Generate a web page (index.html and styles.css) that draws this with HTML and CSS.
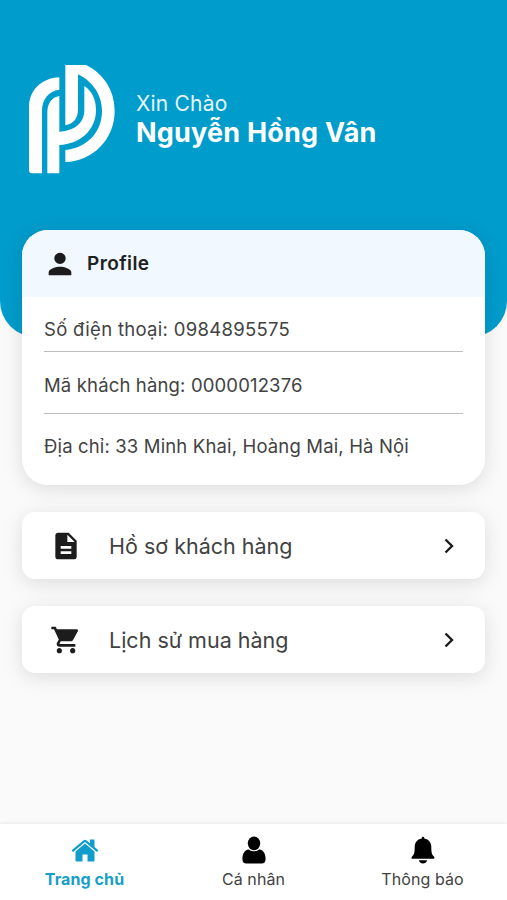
FILE: index.html
```html
<!DOCTYPE html>
<html lang="vi">
<head>
<title>Trang chủ</title>
<meta charset="utf-8">
<meta name="viewport" content="width=device-width, initial-scale=1">
<link rel="stylesheet" href="styles.css">
</head>

<body>
  <div id="main">
    <div id="top">
      <svg class="logo" viewBox="41 45 258 327">
        <path d="M41 370V172C41 122 78 84 132 82V119C100 123 80 148 80 182V370H50Q41 370 41 361Z"/>
        <path d="M96 370V188C96 160 109 142 132 138V245C176 243 207 220 207 180V108C230 124 242 148 242 180C242 240 195 282 132 285V370Z"/>
        <path d="M150 45H212C264 70 298 120 298 183C298 268 232 334 150 336V300C215 294 260 246 260 183C260 135 232 94 188 73V178C188 206 174 222 150 226Z"/>
      </svg>
      <div class="hello">
        <span class="hi">Xin Chào</span>
        <span class="name">Nguyễn Hồng Vân</span>
      </div>
    </div>

    <div id="profile">
      <div class="profileHead">
        <svg width="34" height="34" viewBox="0 0 24 24"><path d="M12 12c2.21 0 4-1.79 4-4s-1.79-4-4-4-4 1.79-4 4 1.79 4 4 4zm0 2c-2.67 0-8 1.34-8 4v2h16v-2c0-2.66-5.330-4-8-4z"/></svg>
        <span>Profile</span>
      </div>
      <div class="profileBody">
        <div class="row phone">Số điện thoại: 0984895575</div>
        <div class="row code">Mã khách hàng: 0000012376</div>
        <div class="row address">Địa chỉ: 33 Minh Khai, Hoàng Mai, Hà Nội</div>
      </div>
    </div>

    <a class="item">
      <svg class="icon" viewBox="0 0 24 24"><path d="M14 2H6c-1.100 0-1.990.9-1.990 2L4 20c0 1.100.89 2 1.990 2H18c1.100 0 2-.9 2-2V8l-6-6zm2 16H8v-2h8v2zm0-4H8v-2h8v2zm-3-5V3.500L18.500 9H13z"/></svg>
      <span class="label">Hồ sơ khách hàng</span>
      <svg class="arrow" viewBox="0 0 10 16"><path d="M1.500 1.500L8 8l-6.500 6.500"/></svg>
    </a>
    <a class="item">
      <svg class="icon" viewBox="0 0 24 24"><path d="M7 18c-1.100 0-1.990.9-1.990 2S5.900 22 7 22s2-.9 2-2-.9-2-2-2zM1 2v2h2l3.600 7.590-1.350 2.450c-.16.28-.25.61-.25.96 0 1.100.9 2 2 2h12v-2H7.420c-.14 0-.25-.11-.25-.25l.03-.12.9-1.630h7.450c.75 0 1.410-.41 1.750-1.030l3.580-6.490c.08-.14.12-.31.12-.48 0-.55-.45-1-1-1H5.210l-.94-2H1zm16 16c-1.100 0-1.990.9-1.990 2s.89 2 1.990 2 2-.9 2-2-.9-2-2-2z"/></svg>
      <span class="label">Lịch sử mua hàng</span>
      <svg class="arrow" viewBox="0 0 10 16"><path d="M1.500 1.500L8 8l-6.500 6.500"/></svg>
    </a>
  </div>

  <div id="nav">
    <a class="tab active">
      <svg width="28" height="28" viewBox="0 0 28 28">
        <path d="M14 7.500L4.500 15.500V24.500Q4.500 25.500 5.500 25.500H11.500V18.500H16.500V25.500H22.500Q23.500 25.500 23.500 24.500V15.500Z"/>
        <path d="M.6 14.200L12.700 4.200Q14 3.200 15.300 4.200L19 7.200V3.500H23.500V11L27.400 14.200L26 15.900L14 6L2 15.900Z"/>
      </svg>
      <span>Trang chủ</span>
    </a>
    <a class="tab">
      <svg width="28" height="28" viewBox="0 0 28 28">
        <ellipse cx="14" cy="7.300" rx="6.200" ry="6.900"/>
        <path d="M8.700 13.500Q14 17.200 19.300 13.500C23.800 14 25.600 18.300 25.600 23Q25.600 27.600 21.500 27.600H6.500Q2.400 27.600 2.400 23C2.400 18.300 4.200 14 8.700 13.500Z"/>
      </svg>
      <span>Cá nhân</span>
    </a>
    <a class="tab">
      <svg width="28" height="28" viewBox="0 0 28 28">
        <path d="M12.700 1.900Q12.700.7 14 .7T15.300 1.900V2.500C20 3.300 22.300 7 22.300 11C22.300 17 23 18.800 24.800 20.300Q26 21.400 25.200 22.800H2.800Q2 21.400 3.200 20.300C5 18.800 5.700 17 5.700 11C5.700 7 8 3.300 12.700 2.500Z"/>
        <path d="M9.800 24.300H18.200Q17 27.600 14 27.600T9.800 24.300Z"/>
      </svg>
      <span>Thông báo</span>
    </a>
  </div>
</body>
</html>
```
FILE: styles.css
```css
* {box-sizing: border-box;}
body {margin: 0; height: 100vh;
      display: flex; flex-direction: column;
      font-family: Inter, "Noto Sans", sans-serif;
      color: #424242; background-color: #fafafa;
}
#main {flex: 1;}

#top {height: 337px; padding: 65px 28px 0 29px;
      display: flex; align-items: flex-start; gap: 21px;
      background-color: #009ccc;
      border-radius: 0 0 36px 36px;
}
.logo {width: 86px; height: 109px; fill: #fff;}
.hello {display: flex; flex-direction: column;
        padding-top: 26px; color: #fff;
}
.hi {font-size: 21px; line-height: 26px; letter-spacing: 0.2px; opacity: 0.9;}
.name {font-size: 27px; line-height: 31px; font-weight: 700; letter-spacing: 0.2px;}

#profile {height: 255px; margin: -107px 22px 0;
          position: relative; overflow: hidden;
          background-color: #fff; border-radius: 26px;
}
#profile, .item {box-shadow: 0 4px 20px rgba(0,0,0,0.12);}
.profileHead {height: 67px; padding-left: 21px;
              display: flex; align-items: center; gap: 10px;
              background-color: #f1f8ff;
              color: #212121; fill: #1c1c1c;
              font-size: 19px; font-weight: 600; letter-spacing: 0.4px;
}
.profileBody {padding: 0 22px;}
.row {font-size: 18.5px; letter-spacing: 0.15px; white-space: nowrap;}
.phone {height: 55px; line-height: 64px; letter-spacing: 0.3px; border-bottom: 1px solid #bdbdbd;}
.code {height: 62px; line-height: 67px; border-bottom: 1px solid #bdbdbd;}
.address {line-height: 65px;}

.item {height: 67px; margin: 27px 22px 0; padding: 0 31px 0 28px;
       display: flex; align-items: center;
       background-color: #fff; border-radius: 13px;
}
.icon {width: 32px; height: 32px; margin-right: 27px; fill: #1c1c1c;}
.label {flex: 1; font-size: 21.5px;}
.arrow {width: 10px; height: 16px; fill: none; stroke: #1c1c1c; stroke-width: 2.4;}

#nav {height: 76px; padding-top: 12px;
      display: flex;
      background-color: #fff;
      box-shadow: 0 -1px 3px rgba(0,0,0,0.07);
}
.tab {flex: 1; display: flex; flex-direction: column; align-items: center; gap: 5px;
      font-size: 16px; line-height: 20px; letter-spacing: 0.1px;
      fill: #000;
}
.active {color: #179fca; fill: #109dcb; font-weight: 700;}
```
